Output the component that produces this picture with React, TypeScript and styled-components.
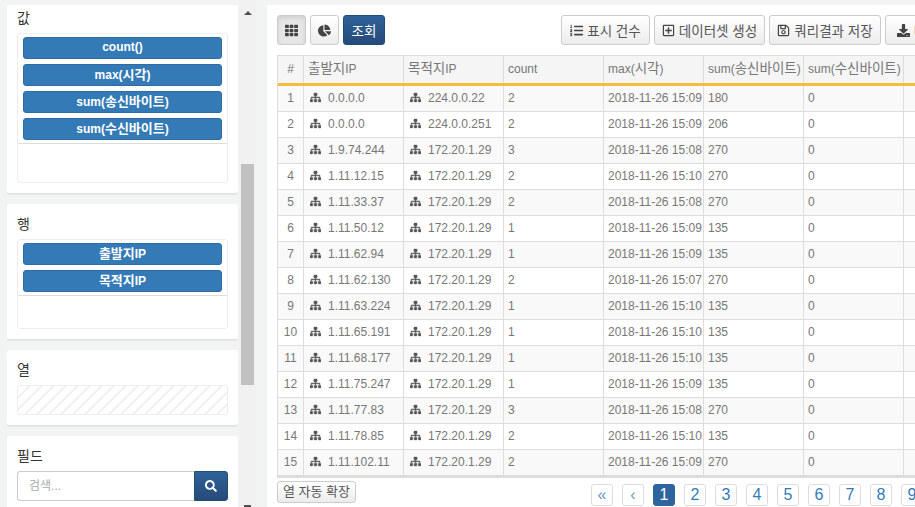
import React from 'react';
import styled, { createGlobalStyle } from 'styled-components';
import { FaTh, FaChartPie, FaListOl, FaRegPlusSquare, FaRegSave, FaDownload, FaSearch, FaSitemap } from 'react-icons/fa';

const Global = createGlobalStyle`
  html, body { margin: 0; padding: 0; width: 915px; height: 507px; overflow: hidden; background: #f2f4f4; }
  #root { width: 915px; height: 507px; overflow: hidden; }
  * { box-sizing: border-box; }
  body { font-family: "Liberation Sans", "Noto Sans CJK KR", sans-serif; font-size: 12px; color: #676a6c; }
`;

const Page = styled.div`
  display: flex; width: 915px; height: 507px; overflow: hidden;
`;
const Side = styled.div`
  width: 231px; margin-left: 7px; padding-top: 5px; display: flex; flex-direction: column; gap: 10px; flex: none; height: 507px; overflow: hidden;
`;
const Card = styled.section<{ $h: number; $top?: number }>`
  flex: none; height: ${p => p.$h}px; background: #fff; border-radius: 3px; border-bottom: 1px solid #e0e2e2;
  box-shadow: 0 1px 1px rgba(0,0,0,.05); padding: ${p => p.$top ?? 13}px 10px 0;
`;
const Title = styled.h4`
  margin: 0 0 7px; font-size: 14px; line-height: 15px; font-weight: 400; color: #333; height: 15px;
`;
const Well = styled.div<{ $h: number }>`
  height: ${p => p.$h}px; border: 1px solid #eee; border-radius: 3px; padding: 3px 5px 0; display: flex; flex-direction: column;
`;
const Pill = styled.div`
  height: 22px; margin-bottom: 5px; background: #337ab7; border: 1px solid #2e6da4; border-radius: 3px; color: #fff;
  font-size: 12px; font-weight: 700; line-height: 19px; text-align: center; flex: none; white-space: nowrap;
`;
const WellRule = styled.div`
  margin: -2px -5px 0; border-top: 1px solid #ddd;
`;
const Hatched = styled.div`
  height: 30px; border: 1px solid #eee; border-radius: 3px;
  background: repeating-linear-gradient(135deg, #fff 0 7.5px, #ececec 7.5px 8.5px);
`;
const SearchRow = styled.div`
  display: flex; height: 30px;
`;
const SearchInput = styled.div`
  flex: 1; border: 1px solid #ccc; border-right: none; border-radius: 3px 0 0 3px; padding: 0 11px; line-height: 28px; color: #aaa; font-size: 12px;
`;
const SearchButton = styled.div`
  width: 34px; background: linear-gradient(#2f6299, #254a79); border: 1px solid #204d74; border-radius: 0 3px 3px 0; color: #fff;
  display: flex; align-items: center; justify-content: center; font-size: 12px;
`;
const Track = styled.div`
  width: 17px; margin-left: 1px; height: 507px; flex: none; background: #f1f1f1; display: flex; flex-direction: column; align-items: center;
`;
const ArrowUp = styled.div`
  margin-top: 11px; width: 0; height: 0; border-left: 4px solid transparent; border-right: 4px solid transparent; border-bottom: 4px solid #505050;
`;
const Thumb = styled.div`
  margin-top: 149px; width: 13px; height: 221px; background: #c1c1c1;
`;
const ArrowDown = styled.div`
  margin-top: 120px; width: 7px; height: 2px; background: #505050;
`;
const Main = styled.main`
  margin: 5px 0 0 11px; width: 648px; height: 502px; background: #fff; padding: 10px 0 0 10px; overflow: hidden; flex: none;
`;
const Toolbar = styled.div`
  display: flex; height: 30px; gap: 4px; width: 700px;
`;
const Btn = styled.div<{ $w: number; $active?: boolean }>`
  flex: none; width: ${p => p.$w}px; height: 30px; border: 1px solid #ccc; border-radius: 3px; color: #555; font-size: 12px;
  background: ${p => p.$active ? '#e6e6e6' : 'linear-gradient(#fff, #ececec)'};
  box-shadow: ${p => p.$active ? 'inset 0 2px 4px rgba(0,0,0,.1)' : 'none'};
  display: flex; align-items: center; justify-content: center; gap: 4px; white-space: nowrap; overflow: hidden;
  svg { flex: none; font-size: 13px; color: #444; }
`;
const Primary = styled(Btn)`
  background: linear-gradient(#2f6299, #254a79); border-color: #204d74; color: #fff;
`;
const Spacer = styled.div`
  width: 168px; flex: none;
`;
const Grid = styled.div`
  margin-top: 10px; width: 648px; border-bottom: 3px solid #ddd; border-top: 1px solid #ddd; border-left: 1px solid #ddd; overflow: hidden;
`;
const HeadRow = styled.div`
  display: flex; height: 30px; background: #f5f5f5; border-bottom: 3px solid #f7bd3a;
`;
const Row = styled.div<{ $odd: boolean }>`
  display: flex; height: 26px; background: ${p => p.$odd ? '#f9f9f9' : '#fff'}; border-bottom: 1px solid #ddd;
  &:last-child { border-bottom: none; height: 25px; }
`;
const Cell = styled.div<{ $w: number; $center?: boolean }>`
  flex: none; width: ${p => p.$w}px; border-right: 1px solid #ddd; padding: 0 ${p => p.$center ? 0 : 4}px; line-height: 25px; font-size: 12px;
  text-align: ${p => p.$center ? 'center' : 'left'}; color: #777; white-space: nowrap; overflow: hidden;
`;
const HeadCell = styled(Cell)`
  line-height: 26px;
`;
const Node = styled(FaSitemap)`
  font-size: 11px; color: #555; margin: 0 7px 0 2px; vertical-align: -1px; stroke: currentColor; stroke-width: 24px;
`;
const Footer = styled.div`
  display: flex; justify-content: space-between; width: 650px; padding-top: 3px;
`;
const Auto = styled.div`
  flex: none; width: 79px; height: 22px; border: 1px solid #ccc; border-radius: 3px; background: linear-gradient(#fff, #ececec); color: #555; font-size: 13px; line-height: 20px; text-align: center; white-space: nowrap;
`;
const Pager = styled.div`
  display: flex; gap: 9px; margin-top: 3px; width: 336px; flex: none;
`;
const PageItem = styled.div<{ $on?: boolean; $nav?: boolean }>`
  flex: none; width: 22px; height: 22px; border: 1px solid #ddd; border-radius: 3px; text-align: center; line-height: 20px; font-size: 16px;
  color: ${p => p.$on ? '#fff' : p.$nav ? '#6b97c2' : '#337ab7'}; background: ${p => p.$on ? '#2f659f' : '#fff'}; border-color: ${p => p.$on ? '#2f659f' : '#ddd'};
`;
const Han = styled.span<{ $s?: number }>`
  font-size: ${p => p.$s ?? 13.5}px;
`;

function K({ t, s }: { t: string; s?: number }) {
  return <>{t.split(/([\uac00-\ud7a3]+)/).map((part, i) => i % 2 ? <Han key={i} $s={s}>{part}</Han> : part)}</>;
}

const rows: [string, string, string, string, string, string][] = [
  ['0.0.0.0','224.0.0.22','2','15:09','180','0'],
  ['0.0.0.0','224.0.0.251','2','15:09','206','0'],
  ['1.9.74.244','172.20.1.29','3','15:08','270','0'],
  ['1.11.12.15','172.20.1.29','2','15:10','270','0'],
  ['1.11.33.37','172.20.1.29','2','15:08','270','0'],
  ['1.11.50.12','172.20.1.29','1','15:09','135','0'],
  ['1.11.62.94','172.20.1.29','1','15:09','135','0'],
  ['1.11.62.130','172.20.1.29','2','15:07','270','0'],
  ['1.11.63.224','172.20.1.29','1','15:10','135','0'],
  ['1.11.65.191','172.20.1.29','1','15:10','135','0'],
  ['1.11.68.177','172.20.1.29','1','15:10','135','0'],
  ['1.11.75.247','172.20.1.29','1','15:09','135','0'],
  ['1.11.77.83','172.20.1.29','3','15:08','270','0'],
  ['1.11.78.85','172.20.1.29','2','15:10','135','0'],
  ['1.11.102.11','172.20.1.29','2','15:09','270','0'],
];
const heads = ['출발지IP','목적지IP','count','max(시각)','sum(송신바이트)','sum(수신바이트)'];

export default function App() {
  return (
    <Page>
      <Global />
      <Side>
        <Card $h={189} $top={6}>
          <Title>값</Title>
          <Well $h={150}>
            {['count()','max(시각)','sum(송신바이트)','sum(수신바이트)'].map(t => <Pill key={t}><K t={t} s={13} /></Pill>)}
            <WellRule />
          </Well>
        </Card>
        <Card $h={136}>
          <Title>행</Title>
          <Well $h={90}>
            {['출발지IP','목적지IP'].map(t => <Pill key={t}><K t={t} s={13} /></Pill>)}
            <WellRule />
          </Well>
        </Card>
        <Card $h={76}>
          <Title>열</Title>
          <Hatched />
        </Card>
        <Card $h={90}>
          <Title>필드</Title>
          <SearchRow>
            <SearchInput>검색...</SearchInput>
            <SearchButton><FaSearch /></SearchButton>
          </SearchRow>
        </Card>
      </Side>
      <Track>
        <ArrowUp />
        <Thumb />
        <ArrowDown />
      </Track>
      <Main>
        <Toolbar>
          <Btn $w={29} $active><FaTh /></Btn>
          <Btn $w={29}><FaChartPie /></Btn>
          <Primary $w={42}><Han>조회</Han></Primary>
          <Spacer />
          <Btn $w={89}><FaListOl /><Han>표시 건수</Han></Btn>
          <Btn $w={111}><FaRegPlusSquare /><Han>데이터셋 생성</Han></Btn>
          <Btn $w={112}><FaRegSave /><Han>쿼리결과 저장</Han></Btn>
          <Btn $w={90}><FaDownload /><Han>다운로드</Han></Btn>
        </Toolbar>
        <Grid>
          <HeadRow>
            <HeadCell $w={26} $center>#</HeadCell>
            {heads.map(h => <HeadCell key={h} $w={100}><K t={h} /></HeadCell>)}
            <HeadCell $w={100} />
          </HeadRow>
          {rows.map((r, i) => (
            <Row key={i} $odd={i % 2 === 0}>
              <Cell $w={26} $center>{i + 1}</Cell>
              <Cell $w={100}><Node />{r[0]}</Cell>
              <Cell $w={100}><Node />{r[1]}</Cell>
              <Cell $w={100}>{r[2]}</Cell>
              <Cell $w={100}>2018-11-26 {r[3]}</Cell>
              <Cell $w={100}>{r[4]}</Cell>
              <Cell $w={100}>{r[5]}</Cell>
              <Cell $w={100} />
            </Row>
          ))}
        </Grid>
        <Footer>
          <Auto>열 자동 확장</Auto>
          <Pager>
            <PageItem $nav>«</PageItem>
            <PageItem $nav>‹</PageItem>
            <PageItem $on>1</PageItem>
            {[2,3,4,5,6,7,8,9].map(n => <PageItem key={n}>{n}</PageItem>)}
          </Pager>
        </Footer>
      </Main>
    </Page>
  );
}
